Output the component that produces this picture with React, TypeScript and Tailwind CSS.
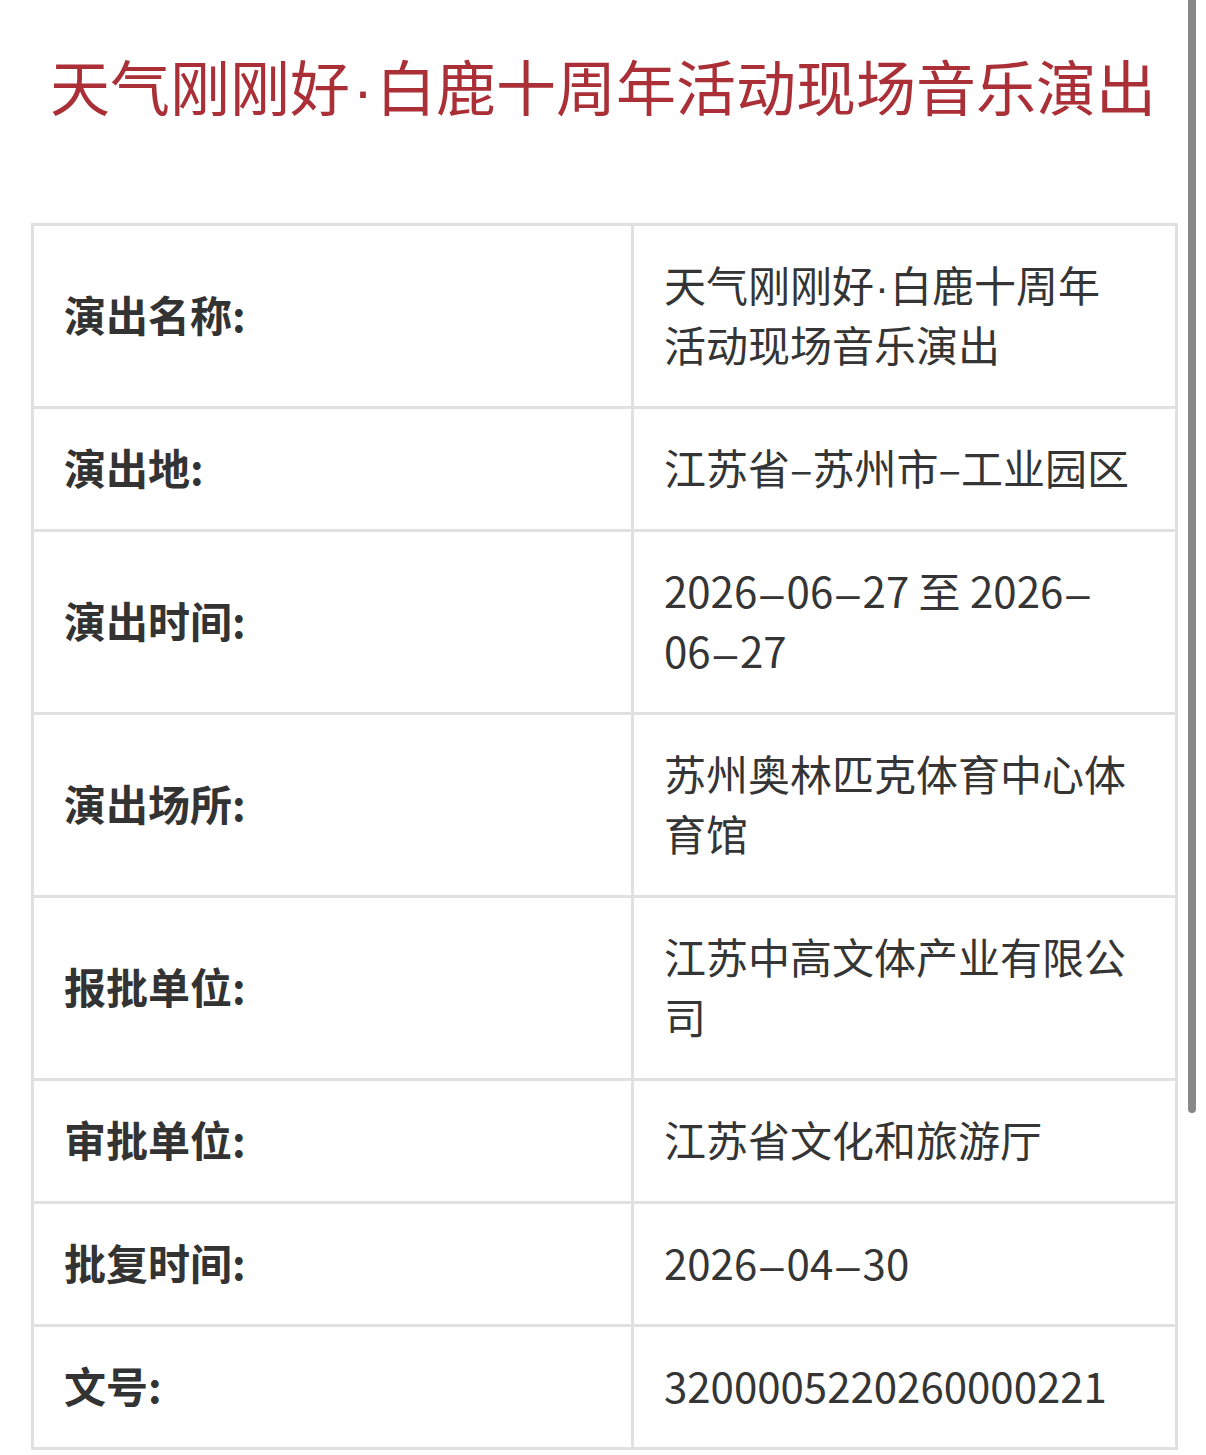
import React from "react";

const Dot = ({ pad }: { pad: string }) => (
  <span
    className={`inline-block leading-none ${pad}`}
    style={{ fontFamily: '"Liberation Sans", sans-serif' }}
  >
    ·
  </span>
);

const Dash = () => (
  <span
    className="inline-block leading-none px-[3px]"
    style={{ fontFamily: '"Liberation Sans", sans-serif' }}
  >
    –
  </span>
);

const rows: { label: string; value: React.ReactNode }[] = [
  {
    label: "演出名称:",
    value: (
      <>
        天气刚刚好<Dot pad="px-[1px]" />白鹿十周年活动现场音乐演出
      </>
    ),
  },
  { label: "演出地:", value: "江苏省–苏州市–工业园区" },
  {
    label: "演出时间:",
    value: (
      <>
        2026<Dash />06<Dash />27 至 2026<Dash />06<Dash />27
      </>
    ),
  },
  { label: "演出场所:", value: "苏州奥林匹克体育中心体育馆" },
  { label: "报批单位:", value: "江苏中高文体产业有限公司" },
  { label: "审批单位:", value: "江苏省文化和旅游厅" },
  {
    label: "批复时间:",
    value: (
      <>
        2026<Dash />04<Dash />30
      </>
    ),
  },
  { label: "文号:", value: "3200005220260000221" },
];

export default function App() {
  return (
    <div
      className="relative w-[1206px] h-[1455px] overflow-hidden bg-white"
      style={{ fontFamily: '"Noto Sans CJK SC", "Noto Sans", sans-serif' }}
    >
      <div className="w-[1206px] pr-[31px] pl-[31px]">
        <h1 className="pt-[41px] text-center text-[60px] leading-[88px] text-[#ab2f37] font-normal">
          天气刚刚好<Dot pad="px-[3px]" />白鹿十周年活动现场音乐演出
        </h1>
        <table className="mt-[94px] w-[1144px] border-collapse border-[3px] border-[#dddddd] table-fixed">
          <colgroup>
            <col className="w-[600px]" />
            <col className="w-[544px]" />
          </colgroup>
          <tbody>
            {rows.map((r) => (
              <tr key={r.label}>
                <td className="border-[3px] border-[#e0e0e0] pl-[30px] pr-[30px] pt-[28px] pb-[32px] align-middle text-[42px] leading-[60px] font-bold text-[#333333]">
                  {r.label}
                </td>
                <td className="border-[3px] border-[#e0e0e0] pl-[30px] pr-[39px] pt-[28px] pb-[32px] align-middle text-[42px] leading-[60px] font-normal text-[#353535]">
                  {r.value}
                </td>
              </tr>
            ))}
          </tbody>
        </table>
      </div>
      <div className="absolute left-[1188px] top-0 w-[8px] h-[1113px] rounded-b-[4px] bg-[#888888]" />
    </div>
  );
}
